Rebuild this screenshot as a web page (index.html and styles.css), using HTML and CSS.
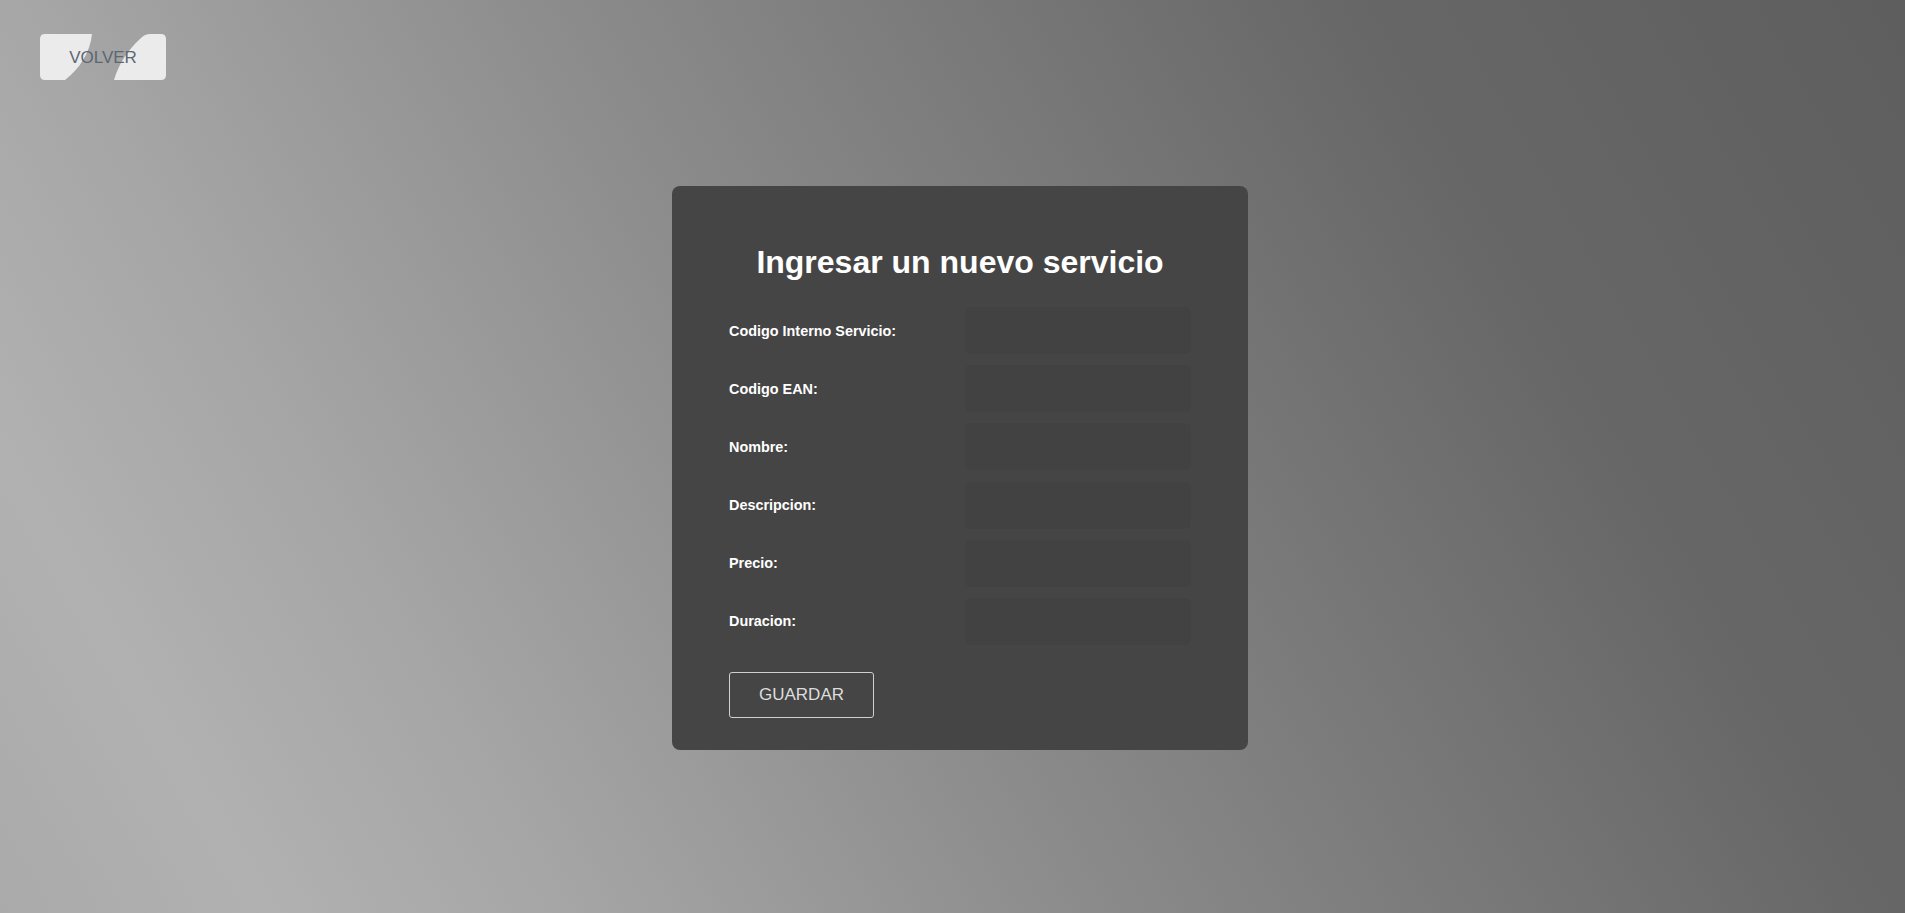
FILE: index.html
```html
<!DOCTYPE html>
<html lang="es">
<head>
<meta charset="utf-8">
<title>Ingresar un nuevo servicio</title>
<link rel="stylesheet" href="styles.css">
</head>
<body>
<header class="top">
  <button class="back" type="button">
    <svg class="back-bg" viewBox="0 0 126 46" width="126" height="46" aria-hidden="true">
      <path d="M5 0 H52 Q49 27 25 46 H5 Q0 46 0 41 V5 Q0 0 5 0 Z" />
      <path d="M121 0 Q126 0 126 5 V41 Q126 46 121 46 H74 Q81 22 101 4 Q105 0 110 0 Z" />
    </svg>
    <span class="back-text">VOLVER</span>
  </button>
</header>
<main class="main">
  <section class="card">
    <h1 class="title">Ingresar un nuevo servicio</h1>
    <form class="form">
      <div class="fields">
        <label class="label" for="cod">Codigo Interno Servicio:</label>
        <input class="input" id="cod" type="text">
        <label class="label" for="ean">Codigo EAN:</label>
        <input class="input" id="ean" type="text">
        <label class="label" for="nom">Nombre:</label>
        <input class="input" id="nom" type="text">
        <label class="label" for="desc">Descripcion:</label>
        <input class="input" id="desc" type="text">
        <label class="label" for="pre">Precio:</label>
        <input class="input" id="pre" type="text">
        <label class="label" for="dur">Duracion:</label>
        <input class="input" id="dur" type="text">
      </div>
      <button class="save" type="button">GUARDAR</button>
    </form>
  </section>
</main>
</body>
</html>
```
FILE: styles.css
```css
html, body {
  margin: 0;
  padding: 0;
}

body {
  height: 100vh;
  overflow: hidden;
  font-family: "Liberation Sans", Arial, sans-serif;
  background: linear-gradient(60deg,
    #aaaaaa 0%,
    #b1b1b1 11%,
    #a6a6a6 23%,
    #9a9a9a 33%,
    #8b8b8b 45%,
    #7a7a7a 60%,
    #676767 77%,
    #5e5e5e 100%);
}

.top {
  padding: 34px 40px 0;
  display: flex;
}

.back {
  position: relative;
  width: 126px;
  height: 46px;
  padding: 2px 0 0;
  border: 0;
  background: transparent;
  cursor: pointer;
  display: flex;
  align-items: center;
  justify-content: center;
  font-family: "Liberation Sans", Arial, sans-serif;
}

.back-bg {
  position: absolute;
  left: 0;
  top: 0;
  fill: #ebebeb;
}

.back-text {
  position: relative;
  font-size: 17px;
  color: #5b6773;
}

.main {
  display: flex;
  justify-content: center;
  padding-left: 15px;
  margin-top: 106px;
}

.card {
  width: 576px;
  box-sizing: border-box;
  padding: 57px 57px 32px;
  background: #454545;
  border-radius: 8px;
}

.title {
  margin: 1px 0 27px;
  font-size: 32px;
  line-height: 36px;
  font-weight: bold;
  color: #ffffff;
  text-align: center;
}

.form {
  display: flex;
  flex-direction: column;
  align-items: flex-start;
}

.fields {
  display: grid;
  grid-template-columns: 236px 226px;
  grid-auto-rows: 47px;
  row-gap: 11.2px;
  align-items: center;
}

.label {
  font-size: 14.4px;
  font-weight: bold;
  color: #ffffff;
}

.input {
  box-sizing: border-box;
  width: 226px;
  height: 47px;
  border: 0;
  border-radius: 6px;
  background: #424242;
  outline: none;
  color: #fff;
  padding: 0 12px;
}

.save {
  margin-top: 26.6px;
  width: 145px;
  height: 46px;
  box-sizing: border-box;
  border: 1px solid #d0d0d0;
  border-radius: 3px;
  background: transparent;
  color: #dddddd;
  font-family: "Liberation Sans", Arial, sans-serif;
  font-size: 17px;
  cursor: pointer;
}
```
